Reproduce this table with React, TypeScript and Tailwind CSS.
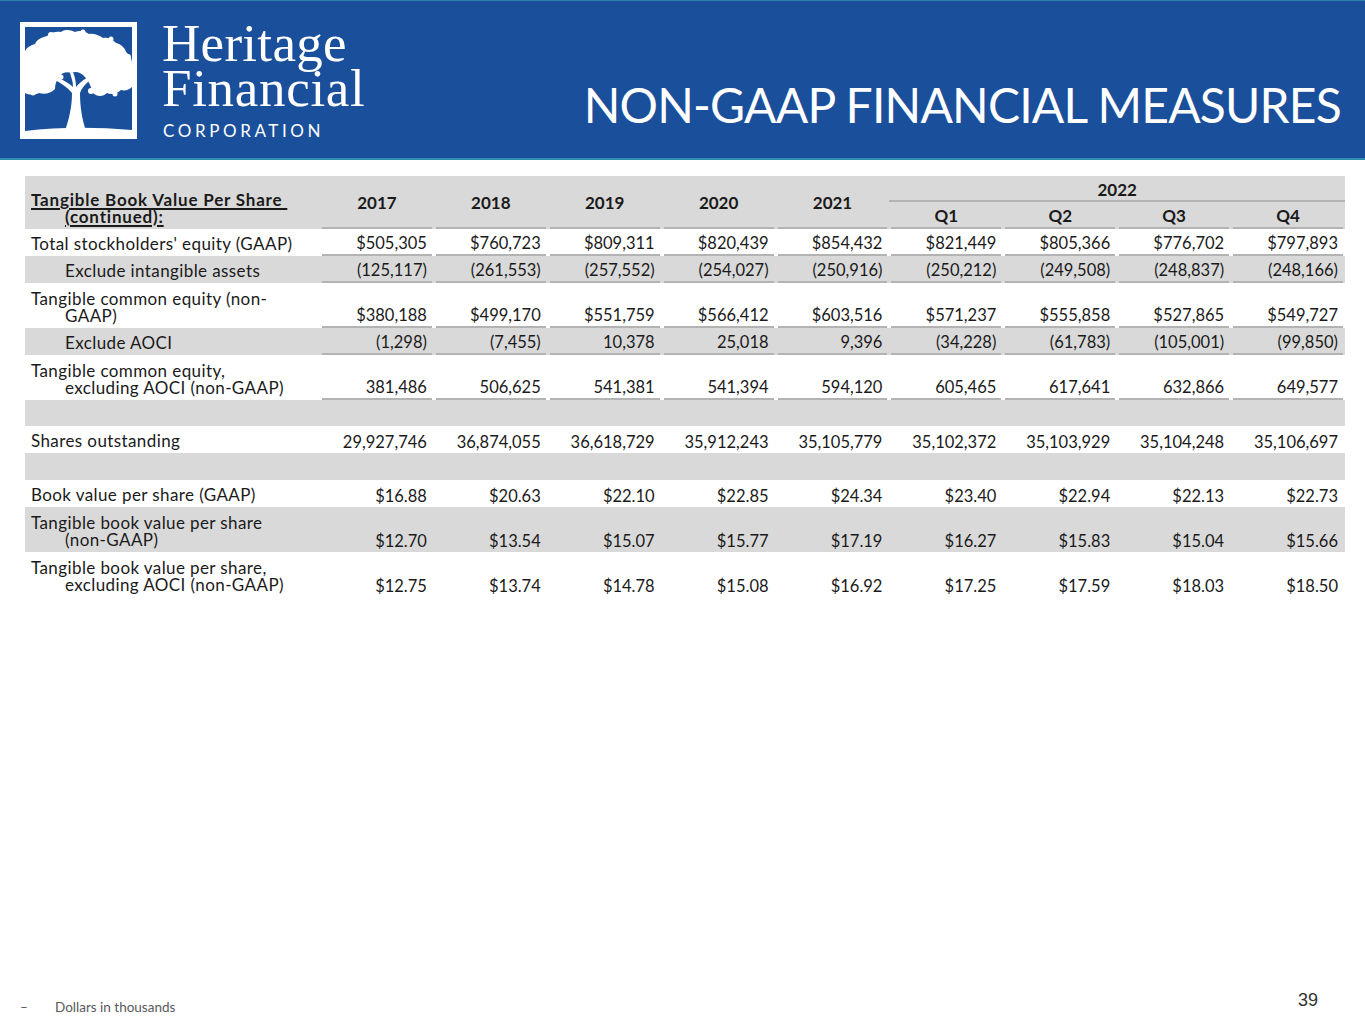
import React from "react";

type Row = {
  label: string[];
  indent?: boolean;
  vals?: string[];
  gray?: boolean;
  line?: boolean;
  h: string;
};

const rows: Row[] = [
  {
    label: ["Total stockholders' equity (GAAP)"],
    vals: ["$505,305", "$760,723", "$809,311", "$820,439", "$854,432", "$821,449", "$805,366", "$776,702", "$797,893"],
    line: true,
    h: "h-[27px]",
  },
  {
    label: ["Exclude intangible assets"],
    indent: true,
    vals: ["(125,117)", "(261,553)", "(257,552)", "(254,027)", "(250,916)", "(250,212)", "(249,508)", "(248,837)", "(248,166)"],
    gray: true,
    line: true,
    h: "h-[27px]",
  },
  {
    label: ["Tangible common equity (non-", "GAAP)"],
    vals: ["$380,188", "$499,170", "$551,759", "$566,412", "$603,516", "$571,237", "$555,858", "$527,865", "$549,727"],
    line: true,
    h: "h-[45px]",
  },
  {
    label: ["Exclude AOCI"],
    indent: true,
    vals: ["(1,298)", "(7,455)", "10,378", "25,018", "9,396", "(34,228)", "(61,783)", "(105,001)", "(99,850)"],
    gray: true,
    line: true,
    h: "h-[27px]",
  },
  {
    label: ["Tangible common equity,", "excluding AOCI (non-GAAP)"],
    vals: ["381,486", "506,625", "541,381", "541,394", "594,120", "605,465", "617,641", "632,866", "649,577"],
    line: true,
    h: "h-[45px]",
  },
  { label: [], gray: true, h: "h-[26px]" },
  {
    label: ["Shares outstanding"],
    vals: ["29,927,746", "36,874,055", "36,618,729", "35,912,243", "35,105,779", "35,102,372", "35,103,929", "35,104,248", "35,106,697"],
    h: "h-[27px]",
  },
  { label: [], gray: true, h: "h-[27px]" },
  {
    label: ["Book value per share (GAAP)"],
    vals: ["$16.88", "$20.63", "$22.10", "$22.85", "$24.34", "$23.40", "$22.94", "$22.13", "$22.73"],
    h: "h-[27px]",
  },
  {
    label: ["Tangible book value per share", "(non-GAAP)"],
    vals: ["$12.70", "$13.54", "$15.07", "$15.77", "$17.19", "$16.27", "$15.83", "$15.04", "$15.66"],
    gray: true,
    h: "h-[45px]",
  },
  {
    label: ["Tangible book value per share,", "excluding AOCI (non-GAAP)"],
    vals: ["$12.75", "$13.74", "$14.78", "$15.08", "$16.92", "$17.25", "$17.59", "$18.03", "$18.50"],
    h: "h-[45px]",
  },
];

function TreeLogo() {
  return (
    <div className="w-[117px] h-[117px] border-[5px] border-white shrink-0 mt-[21px]">
      <svg viewBox="0 0 107 107" width="107" height="107" className="block">
        <g fill="#ffffff">
          <path d="M0,24 C2,20 6,18 10,17 C12,12 18,10 22,9 C26,5 32,4 36,5 C40,2 46,3 50,5 C54,3 60,4 64,7 C68,6 74,8 78,11 C83,10 88,13 91,16 C96,17 100,21 101,25 C105,28 107,32 107,36 L107,60 C104,63 100,64 96,63 C92,67 86,68 82,66 C78,70 72,70 68,66 C66,60 64,54 60,50 C56,45 50,44 46,46 C42,44 36,46 34,50 C31,54 30,58 30,62 C26,66 20,68 14,66 C10,68 4,68 0,66 Z" />
          <circle cx="26" cy="8" r="3" />
          <circle cx="58" cy="5" r="2.5" />
          <circle cx="86" cy="12" r="2.5" />
          <circle cx="103" cy="30" r="3" />
          <circle cx="8" cy="66" r="2.5" />
          <circle cx="90" cy="67" r="2.5" />
          <circle cx="66" cy="64" r="3" />
          <circle cx="36" cy="50" r="2.5" />
          <path d="M40,104 C44,92 47,80 47,66 C42,60 36,56 30,53 L32,50 C38,53 44,56 48,60 C48,54 46,50 45,46 L48,45 C50,50 51,55 51,60 C56,54 63,49 72,46 L73,49 C65,52 58,58 55,66 C55,80 57,92 61,104 Z" />
          <path d="M0,104 Q50,98 107,103 L107,107 L0,107 Z" />
        </g>
      </svg>
    </div>
  );
}

export default function App() {
  const table = "font-['Lato','Noto_Sans',sans-serif] text-[#1a1a1a]";
  return (
    <div className="w-[1365px] h-[1024px] bg-white flex flex-col overflow-hidden">
      {/* Header band */}
      <div className="h-[160px] bg-[#1a4f9c] border-t border-[#2b7fa8] border-b-2 border-b-[#2e8db0] flex justify-between px-[20px] shrink-0">
        <div className="flex">
          <TreeLogo />
          <div className="ml-[25px] pt-[20px] text-white">
            <div className="font-['Liberation_Serif',serif] text-[53px] leading-[45px] tracking-[0.3px]">
              Heritage
            </div>
            <div className="font-['Liberation_Serif',serif] text-[53px] leading-[45px] tracking-[0.7px]">
              Financial
            </div>
            <div className="font-['Lato',sans-serif] text-[17px] leading-[20px] tracking-[3.6px] mt-[10px] ml-[1px]">
              CORPORATION
            </div>
          </div>
        </div>
        <div className="self-end pb-[29px] pr-[4px] font-['Lato',sans-serif] text-white text-[48px] leading-[48px] tracking-[-0.8px]">
          NON-GAAP FINANCIAL MEASURES
        </div>
      </div>

      {/* Table */}
      <div className={`mx-[25px] mt-[16px] w-[1320px] ${table}`}>
        {/* Header */}
        <div className="grid grid-cols-[295px_repeat(9,minmax(0,1fr))] grid-rows-[26px_27px] bg-[#d9d9d9] font-bold text-[17px]">
          <div className="row-span-2 flex flex-col justify-end pb-[4px] leading-[17px] tracking-[0.8px] whitespace-nowrap">
            <div className="pl-[6px]">
              <span className="underline underline-offset-[2px] decoration-[1.5px]">Tangible Book Value Per Share&nbsp;</span>
            </div>
            <div className="pl-[40px]">
              <span className="underline underline-offset-[2px] decoration-[1.5px]">(continued):</span>
            </div>
          </div>
          {["2017", "2018", "2019", "2020", "2021"].map((y) => (
            <div key={y} className="row-span-2 px-[2px]">
              <div className="h-full border-b-2 border-[#b3b3b3] flex items-center justify-center pt-[2px]">{y}</div>
            </div>
          ))}
          <div className="col-span-4 pl-[0px]">
            <div className="h-full border-b-2 border-[#b3b3b3] flex items-center justify-center pt-[3px]">2022</div>
          </div>
          {["Q1", "Q2", "Q3", "Q4"].map((q) => (
            <div key={q} className="px-[2px]">
              <div className="h-full border-b-2 border-[#b3b3b3] flex items-center justify-center pt-[3px]">{q}</div>
            </div>
          ))}
        </div>

        {rows.map((r, i) => (
          <div
            key={i}
            className={`grid grid-cols-[295px_repeat(9,minmax(0,1fr))] ${r.h} ${r.gray ? "bg-[#d9d9d9]" : "bg-white"}`}
          >
            <div className="flex flex-col justify-end pb-[4px] leading-[17px] whitespace-nowrap text-[17px] tracking-[0.4px]">
              {r.label.map((l, j) => (
                <div key={j} className={j === 0 && !r.indent ? "pl-[6px]" : "pl-[40px]"}>
                  {l}
                </div>
              ))}
            </div>
            {r.vals
              ? r.vals.map((v, j) => (
                  <div key={j} className="px-[2px]">
                    <div
                      className={`h-full flex items-end justify-end pb-[2px] pr-[5px] leading-[17px] text-[16.5px] ${
                        r.line ? "border-b-2 border-[#b3b3b3]" : ""
                      }`}
                    >
                      {v}
                    </div>
                  </div>
                ))
              : null}
          </div>
        ))}
      </div>

      {/* Footer */}
      <div className="mt-auto flex justify-between items-end px-[20px] pb-[7px]">
        <div className="flex items-center font-['Lato',sans-serif] text-[13.5px] leading-[20px] text-[#595959]">
          <span className="w-[35px]">–</span>
          <span>Dollars in thousands</span>
        </div>
        <div className="font-['Liberation_Sans',Arial,sans-serif] text-[18px] leading-[27px] text-[#333333] pr-[27px] mb-[3px]">39</div>
      </div>
    </div>
  );
}
